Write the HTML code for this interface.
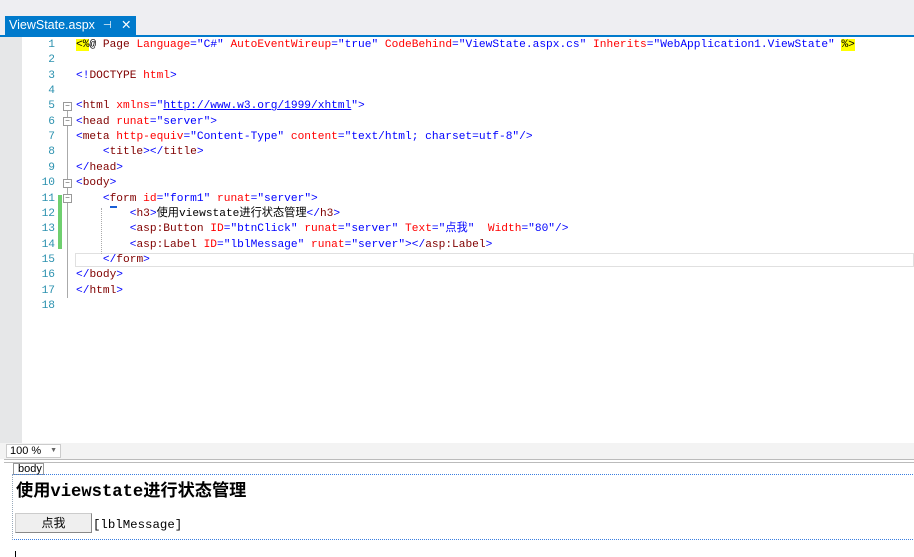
<!DOCTYPE html>
<html><head><meta charset="utf-8"><style>
body{margin:0;width:914px;height:557px;overflow:hidden;background:#fff;position:relative;font-family:"Liberation Mono","Noto Sans CJK SC",monospace}
.abs{position:absolute}
#top{left:0;top:0;width:914px;height:35px;background:#eeeef2}
#tab{left:5px;top:16px;width:131px;height:19px;background:#007acc;color:#fff;font:12.5px "Liberation Sans",sans-serif;line-height:19px}
#bl{left:0;top:35px;width:914px;height:2px;background:#007acc}
#gut{left:0;top:37px;width:22px;height:406px;background:#e6e7e8}
.ln{position:absolute;left:22px;width:33px;text-align:right;color:#2b91af;font-size:11.2px;line-height:15.35px}
.cl{position:absolute;left:76px;font-size:11.2px;line-height:15.35px;white-space:pre;color:#000}
.t{color:#0000ff}.e{color:#800000}.a{color:#ff0000}.v{color:#0000ff}
.box{position:absolute;left:63px;width:7px;height:7px;border:1px solid #999;background:#fff;font-size:8px;line-height:7px;text-align:center;color:#555}
</style></head><body>
<div class="abs" id="top"></div>
<div class="abs" id="tab"><span style="margin-left:4px">ViewState.aspx</span><span style="position:absolute;left:98px;font-size:10px">⊣</span><span style="position:absolute;left:116px">✕</span></div>
<div class="abs" id="bl"></div>
<div class="abs" id="gut"></div>
<div class="abs" style="left:58px;top:195px;width:4px;height:54px;background:#6fcf6f"></div>
<div class="abs" style="left:75px;top:253px;width:839px;height:14px;border:1px solid #e0e0e0;box-sizing:border-box"></div>
<div class="abs" style="left:67px;top:108px;width:1px;height:190px;background:#aaa"></div>
<div class="abs" style="left:101px;top:208px;width:0;height:46px;border-left:1px dotted #aaa"></div>
<div class="abs" style="left:110px;top:206px;width:7px;height:2px;background:#1a5fd6"></div>
<div class="box" style="top:102px">−</div>
<div class="box" style="top:117px">−</div>
<div class="box" style="top:179px">−</div>
<div class="box" style="top:194px">−</div>
<div style="position:absolute;top:38px;left:0">
<div class="ln" style="top:0">1</div><div class="ln" style="top:15.35px">2</div><div class="ln" style="top:30.7px">3</div><div class="ln" style="top:46.05px">4</div><div class="ln" style="top:61.4px">5</div><div class="ln" style="top:76.75px">6</div><div class="ln" style="top:92.1px">7</div><div class="ln" style="top:107.45px">8</div><div class="ln" style="top:122.8px">9</div><div class="ln" style="top:138.15px">10</div><div class="ln" style="top:153.5px">11</div><div class="ln" style="top:168.85px">12</div><div class="ln" style="top:184.2px">13</div><div class="ln" style="top:199.55px">14</div><div class="ln" style="top:214.9px">15</div><div class="ln" style="top:230.25px">16</div><div class="ln" style="top:245.6px">17</div><div class="ln" style="top:260.95px">18</div>
<div class="cl" style="top:0"><span style="background:#ffff00">&lt;%</span>@ <span class="e">Page</span> <span class="a">Language</span><span class="t">="C#"</span> <span class="a">AutoEventWireup</span><span class="t">="true"</span> <span class="a">CodeBehind</span><span class="t">="ViewState.aspx.cs"</span> <span class="a">Inherits</span><span class="t">="WebApplication1.ViewState"</span> <span style="background:#ffff00">%&gt;</span></div>
<div class="cl" style="top:30.7px"><span class="t">&lt;!</span><span class="e">DOCTYPE</span> <span class="a">html</span><span class="t">&gt;</span></div>
<div class="cl" style="top:61.4px"><span class="t">&lt;</span><span class="e">html</span> <span class="a">xmlns</span><span class="t">="<u>http://www.w3.org/1999/xhtml</u>"&gt;</span></div>
<div class="cl" style="top:76.75px"><span class="t">&lt;</span><span class="e">head</span> <span class="a">runat</span><span class="t">="server"&gt;</span></div>
<div class="cl" style="top:92.1px"><span class="t">&lt;</span><span class="e">meta</span> <span class="a">http-equiv</span><span class="t">="Content-Type"</span> <span class="a">content</span><span class="t">="text/html; charset=utf-8"/&gt;</span></div>
<div class="cl" style="top:107.45px">    <span class="t">&lt;</span><span class="e">title</span><span class="t">&gt;&lt;/</span><span class="e">title</span><span class="t">&gt;</span></div>
<div class="cl" style="top:122.8px"><span class="t">&lt;/</span><span class="e">head</span><span class="t">&gt;</span></div>
<div class="cl" style="top:138.15px"><span class="t">&lt;</span><span class="e">body</span><span class="t">&gt;</span></div>
<div class="cl" style="top:153.5px">    <span class="t">&lt;</span><span class="e">form</span> <span class="a">id</span><span class="t">="form1"</span> <span class="a">runat</span><span class="t">="server"&gt;</span></div>
<div class="cl" style="top:168.85px">        <span class="t">&lt;</span><span class="e">h3</span><span class="t">&gt;</span>使用viewstate进行状态管理<span class="t">&lt;/</span><span class="e">h3</span><span class="t">&gt;</span></div>
<div class="cl" style="top:184.2px">        <span class="t">&lt;</span><span class="e">asp:Button</span> <span class="a">ID</span><span class="t">="btnClick"</span> <span class="a">runat</span><span class="t">="server"</span> <span class="a">Text</span><span class="t">="点我"</span>  <span class="a">Width</span><span class="t">="80"/&gt;</span></div>
<div class="cl" style="top:199.55px">        <span class="t">&lt;</span><span class="e">asp:Label</span> <span class="a">ID</span><span class="t">="lblMessage"</span> <span class="a">runat</span><span class="t">="server"&gt;&lt;/</span><span class="e">asp:Label</span><span class="t">&gt;</span></div>
<div class="cl" style="top:214.9px">    <span class="t">&lt;/</span><span class="e">form</span><span class="t">&gt;</span></div>
<div class="cl" style="top:230.25px"><span class="t">&lt;/</span><span class="e">body</span><span class="t">&gt;</span></div>
<div class="cl" style="top:245.6px"><span class="t">&lt;/</span><span class="e">html</span><span class="t">&gt;</span></div>
</div>
<div class="abs" style="left:0;top:443px;width:914px;height:16px;background:#f3f3f3"></div>
<div class="abs" style="left:6px;top:444px;width:55px;height:14px;background:#fff;border:1px solid #ccc;box-sizing:border-box;font:11px 'Liberation Sans',sans-serif;line-height:12px;padding-left:3px">100 %<span style="position:absolute;right:3px;font-size:7px;color:#666">▼</span></div>
<div class="abs" style="left:4px;top:459px;width:910px;height:1px;background:#bbb"></div>
<div class="abs" style="left:4px;top:462px;width:910px;height:1px;background:#bbb"></div>
<div class="abs" style="left:13px;top:463px;width:31px;height:12px;border:1px solid #999;box-sizing:border-box;font:11px 'Liberation Sans',sans-serif;line-height:10px;padding-left:4px;background:#fff">body</div>
<div class="abs" style="left:12px;top:474px;width:902px;height:64px;border-top:1px dotted #3a7ee0;border-bottom:1px dotted #3a7ee0;border-left:1px dotted #9ab"></div>
<div class="abs" style="left:16px;top:476px;font:bold 17.2px 'Liberation Mono','Noto Sans CJK SC',monospace;white-space:nowrap">使用viewstate进行状态管理</div>
<div class="abs" style="left:15px;top:513px;width:77px;height:20px;background:#efefef;border:1px solid #888;border-top-color:#ccc;border-left-color:#ccc;box-sizing:border-box;text-align:center;font:12px 'Noto Sans CJK SC',sans-serif;line-height:17px">点我</div>
<div class="abs" style="left:93px;top:518px;font:12.4px 'Liberation Mono',monospace">[lblMessage]</div>
<div class="abs" style="left:15px;top:551px;width:1px;height:6px;background:#000"></div>
</body></html>
